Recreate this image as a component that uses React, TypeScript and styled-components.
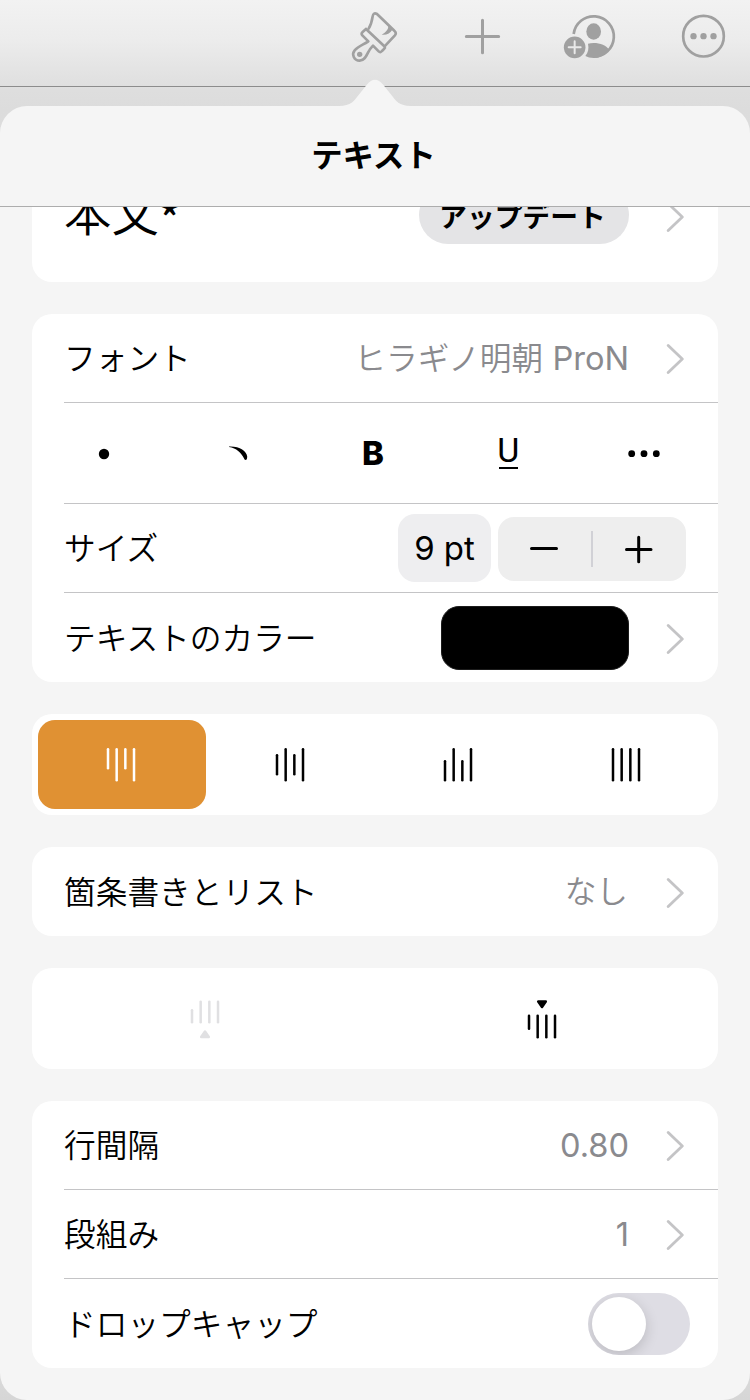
import React from "react";
import styled, { createGlobalStyle } from "styled-components";

const Global = createGlobalStyle`
  * { box-sizing: border-box; }
  body {
    margin: 0;
    background: #dcdcdc;
    color: #000;
    font-family: Inter, "Noto Sans CJK JP", sans-serif;
  }
`;

const Screen = styled.div`
  width: 750px;
  height: 1400px;
  overflow: hidden;
  display: flex;
  flex-direction: column;
  background: linear-gradient(#f2f2f2 0, #ececec 40px, #dedede 90px, #dcdcdc 110px, #e2e2e2 300px, #e2e2e2 1300px, #d6d6d6 1400px);
`;

const Toolbar = styled.header`
  height: 87px;
  flex: none;
  display: flex;
  justify-content: flex-end;
  gap: 56px;
  padding-right: 22px;
  border-bottom: 1px solid #8c8c8c;
  color: #a0a0a0;
`;

const Popover = styled.section`
  position: relative;
  flex: 1;
  min-height: 0;
  margin-top: 19px;
  display: flex;
  flex-direction: column;
  border-radius: 27px;
  background: #f5f5f5;
`;

const Arrow = styled.svg`
  position: absolute;
  left: 339px;
  top: -27px;
`;

const Title = styled.h1`
  margin: 0;
  height: 101px;
  flex: none;
  border-bottom: 1px solid #adadad;
  padding: 1px 3px 0 0;
  text-align: center;
  font-size: 31.4px;
  line-height: 98px;
  font-weight: 700;
`;

const Content = styled.div`
  flex: 1;
  min-height: 0;
  overflow: hidden;
  padding: 0 32px;
  display: flex;
  flex-direction: column;
  gap: 32px;
`;

const Card = styled.div<{ $scrolled?: boolean }>`
  flex: none;
  background: #fff;
  border-radius: 20px;
  margin-top: ${(p) => (p.$scrolled ? "-58px" : "0")};
`;

const Row = styled.div<{ $height?: number; $line?: boolean; $end?: number }>`
  height: ${(p) => p.$height ?? 89}px;
  margin-left: 32px;
  padding-right: ${(p) => p.$end ?? 34}px;
  display: flex;
  align-items: center;
  border-bottom: ${(p) => (p.$line ? "1px solid #c4c4c6" : "none")};
`;

const Label = styled.span`
  flex: 1;
  font-family: "Noto Sans CJK JP", sans-serif;
  font-size: 31.7px;
  line-height: 40px;
  padding-bottom: 4px;
  font-weight: 350;
  white-space: nowrap;
`;

const StyleName = styled(Label)`
  font-size: 47.5px;
  line-height: 60px;
  padding-bottom: 10px;
  font-weight: 350;
`;

const Modified = styled.span`
  font-size: 44px;
  line-height: 40px;
  vertical-align: -4px;
  font-weight: 500;
`;

const Value = styled.span`
  font-size: 32.6px;
  line-height: 40px;
  color: #8a8a8e;
  white-space: nowrap;
`;

const JapaneseValue = styled.span<{ $end?: number }>`
  font-size: 31.7px;
  font-weight: 350;
  margin-right: ${(p) => p.$end ?? 0}px;
`;

const Chevron = styled.svg`
  flex: none;
  margin-left: 37px;
  position: relative;
  top: 1px;
`;

const UpdateButton = styled.button`
  width: 210px;
  height: 58px;
  margin-bottom: 2px;
  border: 0;
  padding: 0 3px 0 0;
  border-radius: 29px;
  background: #e4e4e6;
  color: #000;
  font: 700 27.8px/56px "Noto Sans CJK JP", sans-serif;
  white-space: nowrap;
`;

const StyleRow = styled.div`
  height: 101px;
  margin-left: 32px;
  border-bottom: 1px solid #c4c4c6;
  display: flex;
`;

const StyleCells = styled.div`
  flex: 1;
  display: grid;
  grid-template-columns: repeat(5, 134.8px);
  margin-left: -27px;
  align-items: center;
  justify-items: center;
`;

const Bold = styled.span`
  font-size: 33px;
  line-height: 40px;
  font-weight: 800;
  padding-right: 2px;
`;

const Underlined = styled.span`
  font-family: Roboto, sans-serif;
  font-size: 34px;
  line-height: 24px;
  font-weight: 400;
  width: 19px;
  display: flex;
  justify-content: center;
  padding-bottom: 5px;
  margin-right: 1px;
  border-bottom: 2px solid #000;
`;

const SizeField = styled.div`
  width: 93px;
  height: 68px;
  border-radius: 17px;
  background: #eeeef0;
  text-align: center;
  font-size: 33px;
  line-height: 68px;
  margin-right: 7px;
`;

const Stepper = styled.div`
  width: 188px;
  height: 64px;
  margin-top: 2px;
  border-radius: 16px;
  background: #eee;
  display: flex;
`;

const Swatch = styled.div`
  width: 188px;
  height: 64px;
  border-radius: 18px;
  background: #000;
  border: 1px solid #1c1c1c;
`;

const Segments = styled.div<{ $count: number }>`
  height: 101px;
  padding: 6px 7px 6px 6px;
  display: grid;
  grid-template-columns: repeat(${(p) => p.$count}, 1fr);
`;

const Segment = styled.div<{ $active?: boolean; $disabled?: boolean }>`
  display: flex;
  align-items: center;
  justify-content: center;
  padding-right: ${(p) => (p.$active || p.$disabled ? 2 : 1)}px;
  border-radius: 17px;
  background: ${(p) => (p.$active ? "#e09133" : "transparent")};
  color: ${(p) => (p.$active ? "#fff" : p.$disabled ? "#e0e0e2" : "#000")};
`;

const Switch = styled.div`
  width: 102px;
  height: 62px;
  border-radius: 31px;
  background: #dedde4;
  padding: 4px;
  overflow: hidden;
`;

const Knob = styled.div`
  width: 54px;
  height: 54px;
  border-radius: 50%;
  background: #fff;
  box-shadow: 0 4px 14px rgba(0, 0, 0, 0.16);
`;

const ChevronIcon = () => (
  <Chevron width="18" height="30" viewBox="0 0 18 30" fill="none" stroke="#c4c4c6" strokeWidth="2.8" strokeLinecap="round" strokeLinejoin="round">
    <path d="M2.2 1.5 16.3 15 2.2 28.5" />
  </Chevron>
);

const BrushIcon = () => (
  <svg width="54" height="76" viewBox="60 0 162 228" fill="none" stroke="currentColor" strokeWidth="8" strokeLinejoin="round" strokeLinecap="round">
    <path d="M116 86C122 76 126 62 128 49Q130 36 141 42L193 92Q201 99 194 107L166 137" />
    <path d="M108 87 163 139M108 87 97 97Q93 101 97 106L115 124C100 134 85 139 74 151C64 163 72 182 89 182C103 182 108 170 114 158C118 150 123 143 129 137L146 154Q151 159 156 153L163 146Q166 143 163 139" />
    <path d="M174 73C178 87 168 97 155 104C169 106 180 101 188 88Z" fill="currentColor" stroke="none" />
    <circle cx="89" cy="163" r="8" fill="currentColor" stroke="none" />
  </svg>
);

const AddIcon = () => (
  <svg width="44" height="76" viewBox="390 0 132 228" stroke="currentColor" strokeWidth="9" strokeLinecap="round">
    <path d="M457.5 61V158M409 109.5H506" />
  </svg>
);

const CollaborateIcon = () => (
  <svg width="64" height="76" viewBox="60 0 192 228" fill="currentColor">
    <path d="M101 102A60.5 60.5 0 1 1 160 170" fill="none" stroke="currentColor" strokeWidth="8" />
    <ellipse cx="161" cy="94.500" rx="22" ry="24.500" />
    <path d="M144 131C168 125 198 133 208 150C196 166 178 174 161 174C151 174 143 172 136 168C145 157 147 145 144 131Z" />
    <circle cx="104" cy="142" r="32.500" />
    <path d="M104 124V160M86 142H122" stroke="#e9e9e9" strokeWidth="6" strokeLinecap="round" />
  </svg>
);

const MoreIcon = () => (
  <svg width="48" height="76" viewBox="420 0 144 228" fill="currentColor">
    <circle cx="490.500" cy="108.500" r="61" fill="none" stroke="currentColor" strokeWidth="8" />
    <circle cx="460.500" cy="108.500" r="9.500" />
    <circle cx="490.500" cy="108.500" r="9.500" />
    <circle cx="520.500" cy="108.500" r="9.500" />
  </svg>
);

/* Each pair is the top and the bottom of one vertical text line. */
const Lines = ({ spans, children }: { spans: [number, number][]; children?: React.ReactNode }) => (
  <svg width="30" height="40" viewBox="0 0 30 40" fill="currentColor" stroke="currentColor" strokeWidth="2.500" strokeLinecap="round" strokeLinejoin="round">
    {spans.map(([a, b], i) => (
      <path key={i} d={`M${2 + i * 8.67} ${a + 1.25}V${b - 1.25}`} />
    ))}
    {children}
  </svg>
);

const alignments: [number, number][][] = [
  [[3, 24.500], [3, 36.500], [3, 24.500], [3, 36.500]],
  [[9, 30.500], [3, 36.500], [9, 30.500], [3, 36.500]],
  [[15, 36.500], [3, 36.500], [15, 36.500], [3, 36.500]],
  [[3, 36.500], [3, 36.500], [3, 36.500], [3, 36.500]],
];

export default function App() {
  return (
    <Screen>
      <Global />
      <Toolbar>
        <BrushIcon />
        <AddIcon />
        <CollaborateIcon />
        <MoreIcon />
      </Toolbar>
      <Popover>
        <Arrow width="72" height="28" viewBox="0 0 72 28" fill="#f5f5f5">
          <path d="M0 28V27C12 27 15 22 20 15.500L28 5.500C33-.8 39-.8 44 5.500L52 15.500C57 22 60 27 72 27V28Z" />
        </Arrow>
        <Title>テキスト</Title>
        <Content>
          <Card $scrolled>
            <Row $height={133}>
              <StyleName>本文<Modified>*</Modified></StyleName>
              <UpdateButton>アップデート</UpdateButton>
              <ChevronIcon />
            </Row>
          </Card>

          <Card>
            <Row $line>
              <Label>フォント</Label>
              <Value><JapaneseValue>ヒラギノ明朝</JapaneseValue> ProN</Value>
              <ChevronIcon />
            </Row>
            <StyleRow>
              <StyleCells>
                <svg width="40" height="40" viewBox="0 0 40 40"><circle cx="20" cy="21" r="5.200" /></svg>
                <svg width="40" height="40" viewBox="0 0 40 40"><path d="M10 13.500C20.500 13 27.500 18 28.200 23.500Q28.200 27 26.500 27Q25.500 27 24.800 25C22 19.500 17.500 15.300 10 14Z" /></svg>
                <Bold>B</Bold>
                <Underlined>U</Underlined>
                <svg width="40" height="40" viewBox="0 0 40 40">
                  <circle cx="7.700" cy="20.700" r="3.400" />
                  <circle cx="20" cy="20.700" r="3.400" />
                  <circle cx="32.300" cy="20.700" r="3.400" />
                </svg>
              </StyleCells>
            </StyleRow>
            <Row $line $end={32}>
              <Label>サイズ</Label>
              <SizeField>9 pt</SizeField>
              <Stepper>
                <svg width="188" height="64" viewBox="0 0 188 64" fill="none" stroke="#000" strokeWidth="3" strokeLinecap="round">
                  <path d="M33.500 31.500H58.500M128.500 32.500H153M140.700 20.200V44.800" />
                  <path d="M94 14V50" stroke="#d1d1d6" strokeWidth="2" strokeLinecap="butt" />
                </svg>
              </Stepper>
            </Row>
            <Row>
              <Label>テキストのカラー</Label>
              <Swatch />
              <ChevronIcon />
            </Row>
          </Card>

          <Card>
            <Segments $count={4}>
              {alignments.map((spans, i) => (
                <Segment key={i} $active={i === 0}>
                  <Lines spans={spans} />
                </Segment>
              ))}
            </Segments>
          </Card>

          <Card>
            <Row>
              <Label>箇条書きとリスト</Label>
              <Value><JapaneseValue $end={1}>なし</JapaneseValue></Value>
              <ChevronIcon />
            </Row>
          </Card>

          <Card>
            <Segments $count={2}>
              <Segment $disabled>
                <Lines spans={[[10, 24.500], [1.500, 24.500], [1.500, 24.500], [1.500, 24.500]]}>
                  <path d="M15 32.500 18.800 38H11.200Z" />
                </Lines>
              </Segment>
              <Segment>
                <Lines spans={[[15.500, 31], [15.500, 39.500], [15.500, 39.500], [15.500, 39.500]]}>
                  <path d="M11.200 2.500H18.800L15 8Z" />
                </Lines>
              </Segment>
            </Segments>
          </Card>

          <Card>
            <Row $line>
              <Label>行間隔</Label>
              <Value>0.80</Value>
              <ChevronIcon />
            </Row>
            <Row $line>
              <Label>段組み</Label>
              <Value>1</Value>
              <ChevronIcon />
            </Row>
            <Row $end={28}>
              <Label>ドロップキャップ</Label>
              <Switch><Knob /></Switch>
            </Row>
          </Card>
        </Content>
      </Popover>
    </Screen>
  );
}
